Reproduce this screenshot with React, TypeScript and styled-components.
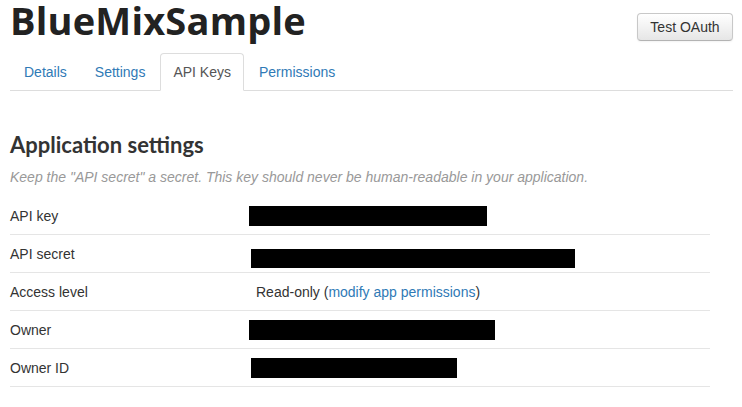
import React from "react";
import styled, { createGlobalStyle } from "styled-components";

const Global = createGlobalStyle`
  html, body { margin: 0; padding: 0; background: #fff; }
  body { font-family: "Liberation Sans", Arial, sans-serif; font-size: 14px; color: #333; }
`;

const Page = styled.div`
  width: 723px;
  padding: 0 9px 0 10px;
`;

const Header = styled.div`
  display: flex;
  justify-content: space-between;
  align-items: flex-start;
  height: 53px;
`;

const Title = styled.h1`
  margin: -6px 0 0;
  font-family: "Open Sans", Lato, sans-serif;
  font-weight: 700;
  font-size: 38px;
  line-height: 52px;
  color: #222;
  letter-spacing: 0.2px;
`;

const Button = styled.button`
  margin-top: 13px;
  width: 96px;
  height: 28px;
  font-family: "Liberation Sans", Arial, sans-serif;
  font-size: 14px;
  color: #333;
  background: linear-gradient(#ffffff, #e6e6e6);
  border: 1px solid #c8c8c8;
  border-bottom-color: #b3b3b3;
  border-radius: 4px;
  box-shadow: inset 0 1px 0 rgba(255,255,255,0.2), 0 1px 2px rgba(0,0,0,0.05);
  padding: 0;
`;

const Tabs = styled.ul`
  display: flex;
  list-style: none;
  margin: 0;
  padding: 0 0 0 1px;
  border-bottom: 1px solid #ddd;
`;

const Tab = styled.li<{ $active?: boolean }>`
  margin: 0 2px -1px 0;
  padding: 8px 12px;
  line-height: 20px;
  border: 1px solid ${(p) => (p.$active ? "#ddd" : "transparent")};
  border-bottom-color: ${(p) => (p.$active ? "#fff" : "transparent")};
  border-radius: 4px 4px 0 0;
  background: ${(p) => (p.$active ? "#fff" : "transparent")};
  color: ${(p) => (p.$active ? "#555" : "#2f7ab6")};
`;

const Heading = styled.h2`
  margin: 39px 0 0;
  font-family: Lato, "Open Sans", sans-serif;
  font-weight: 700;
  font-size: 22px;
  line-height: 30px;
  color: #333;
`;

const Note = styled.p`
  margin: 7px 0 0;
  font-style: italic;
  font-size: 14px;
  line-height: 20px;
  color: #999;
`;

const Table = styled.div`
  width: 700px;
  margin-top: 10px;
`;

const Row = styled.div`
  display: grid;
  grid-template-columns: 246px 1fr;
  align-items: center;
  height: 37px;
  border-bottom: 1px solid #e5e5e5;
`;

const Label = styled.div`
  line-height: 20px;
`;

const Value = styled.div`
  line-height: 20px;
  color: #333;
`;

const Link = styled.a`
  color: #2f7ab6;
  text-decoration: none;
`;

const Redacted = styled.span<{ $w: number; $h: number; $dx: number; $dy: number }>`
  display: block;
  background: #000;
  width: ${(p) => p.$w}px;
  height: ${(p) => p.$h}px;
  margin-left: ${(p) => p.$dx}px;
  margin-top: ${(p) => p.$dy}px;
`;

const rows = [
  { label: "API key", box: { w: 238, h: 20, dx: -7, dy: 0 } },
  { label: "API secret", box: { w: 324, h: 19, dx: -5, dy: 10 } },
  { label: "Access level" },
  { label: "Owner", box: { w: 246, h: 20, dx: -7, dy: 0 } },
  { label: "Owner ID", box: { w: 206, h: 20, dx: -5, dy: 0 } },
];

export default function App() {
  return (
    <>
      <Global />
      <Page>
        <Header>
          <Title>BlueMixSample</Title>
          <Button>Test OAuth</Button>
        </Header>
        <Tabs>
          <Tab>Details</Tab>
          <Tab>Settings</Tab>
          <Tab $active>API Keys</Tab>
          <Tab>Permissions</Tab>
        </Tabs>
        <Heading>Application settings</Heading>
        <Note>Keep the "API secret" a secret. This key should never be human-readable in your application.</Note>
        <Table>
          {rows.map((r) => (
            <Row key={r.label}>
              <Label>{r.label}</Label>
              {r.box ? (
                <Redacted $w={r.box.w} $h={r.box.h} $dx={r.box.dx} $dy={r.box.dy} />
              ) : (
                <Value>
                  Read-only (<Link href="#">modify app permissions</Link>)
                </Value>
              )}
            </Row>
          ))}
        </Table>
      </Page>
    </>
  );
}
